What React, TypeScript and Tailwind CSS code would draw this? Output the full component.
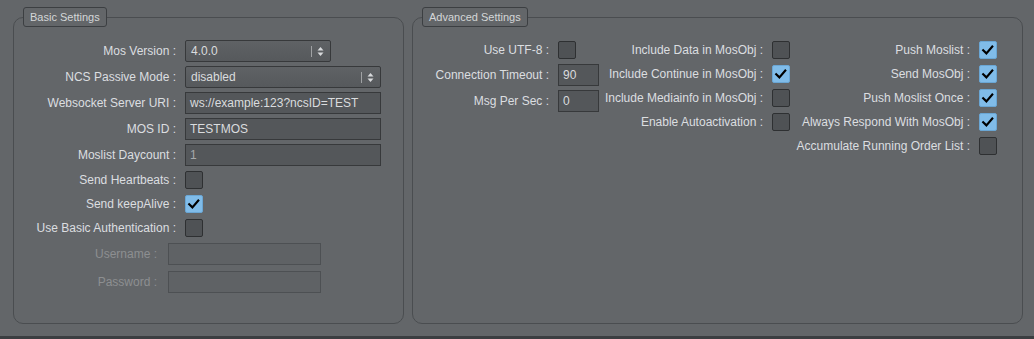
import React from "react";

const FONT = { fontFamily: '"Liberation Sans", Arial, sans-serif' };

function Check({ checked }: { checked?: boolean }) {
  if (checked) {
    return (
      <div className="w-[18px] h-[18px] rounded-[2px] bg-[#80bce9] border border-[#6aa6d4] flex items-center justify-center shrink-0">
        <svg width="18" height="18" viewBox="0 0 18 18">
          <path d="M3.6 9.2 L7.2 12.8 L13.8 5.2" fill="none" stroke="#000" strokeWidth="2.4" strokeLinecap="square" />
        </svg>
      </div>
    );
  }
  return <div className="w-[18px] h-[18px] rounded-[2px] bg-[#4f5255] border border-[#2e3032] shrink-0" />;
}

function TextBox({ value, w, dim, disabled }: { value?: string; w: string; dim?: boolean; disabled?: boolean }) {
  return (
    <div
      className={`${w} h-[22px] border flex items-center pl-[4px] text-[12px] ${
        disabled
          ? "bg-[#5f6265] border-[#4d5053]"
          : "bg-[#54575a] border-[#37393b]"
      } ${dim ? "text-[#a7a9ab]" : "text-[#dadcde]"}`}
    >
      {value}
    </div>
  );
}

function Select({ value, w }: { value: string; w: string }) {
  return (
    <div className={`${w} h-[22px] border border-[#37393b] rounded-[2px] bg-gradient-to-b from-[#5f6265] to-[#56595c] flex items-center pl-[5px] text-[12px] text-[#dadcde]`}>
      <span className="flex-1">{value}</span>
      <div className="w-[1px] h-[11px] bg-[#a0a2a4] mr-[5px]" />
      <svg width="7" height="11" viewBox="0 0 7 11" className="mr-[6px]">
        <path d="M3.5 1 L6.5 4.5 L0.5 4.5 Z" fill="#d8dadc" />
        <path d="M0.5 6.5 L6.5 6.5 L3.5 10 Z" fill="#d8dadc" />
      </svg>
    </div>
  );
}

function Row({
  label,
  labelW,
  gap = "gap-[9px]",
  h = "h-[22px]",
  mt = "",
  disabled,
  children,
}: {
  label: string;
  labelW: string;
  gap?: string;
  h?: string;
  mt?: string;
  disabled?: boolean;
  children: React.ReactNode;
}) {
  return (
    <div className={`flex items-center ${gap} ${h} ${mt}`}>
      <div className={`${labelW} text-right text-[12px] whitespace-nowrap ${disabled ? "text-[#8d8f91]" : "text-[#dcdee0]"}`}>
        {label}
      </div>
      {children}
    </div>
  );
}

function Group({ title, w, children }: { title: string; w: string; children: React.ReactNode }) {
  return (
    <section className={`${w} shrink-0 flex flex-col`}>
      <div className="relative z-10 ml-[10px] w-fit h-[20px] px-[6px] border border-[#3c3f42] rounded-[3px] bg-[#636669] text-[11px] leading-[18px] text-[#d4d6d8]">
        {title}
      </div>
      <div className="-mt-[10px] h-[307px] border border-[#4a4d50] rounded-[10px] pt-[22px]">{children}</div>
    </section>
  );
}

export default function App() {
  const L = "w-[162px]";
  return (
    <div className="w-[1034px] h-[339px] bg-[#636669] flex flex-col" style={FONT}>
      <div className="flex-1 flex gap-[8px] pt-[7px] pl-[13px]">
        <Group title="Basic Settings" w="w-[391px]">
          <div className="flex flex-col">
            <Row label="Mos Version :" labelW={L}>
              <Select value="4.0.0" w="w-[146px]" />
            </Row>
            <Row label="NCS Passive Mode :" labelW={L} mt="mt-[4px]">
              <Select value="disabled" w="w-[196px]" />
            </Row>
            <Row label="Websocket Server URI :" labelW={L} mt="mt-[4px]">
              <TextBox value="ws://example:123?ncsID=TEST" w="w-[196px]" />
            </Row>
            <Row label="MOS ID :" labelW={L} mt="mt-[4px]">
              <TextBox value="TESTMOS" w="w-[196px]" />
            </Row>
            <Row label="Moslist Daycount :" labelW={L} mt="mt-[4px]">
              <TextBox value="1" w="w-[196px]" dim />
            </Row>
            <Row label="Send Heartbeats :" labelW={L} h="h-[20px]" mt="mt-[4px]">
              <Check />
            </Row>
            <Row label="Send keepAlive :" labelW={L} h="h-[20px]" mt="mt-[4px]">
              <Check checked />
            </Row>
            <Row label="Use Basic Authentication :" labelW={L} h="h-[20px]" mt="mt-[4px]">
              <Check />
            </Row>
            <Row label="Username :" labelW="w-[143px]" gap="gap-[11px]" mt="mt-[5px]" disabled>
              <TextBox w="w-[153px]" disabled />
            </Row>
            <Row label="Password :" labelW="w-[143px]" gap="gap-[11px]" mt="mt-[6px]" disabled>
              <TextBox w="w-[153px]" disabled />
            </Row>
          </div>
        </Group>
        <Group title="Advanced Settings" w="w-[611px]">
          <div className="flex items-start">
            <div className="flex flex-col w-[186px]">
              <Row label="Use UTF-8 :" labelW="w-[136px]" h="h-[20px]">
                <Check />
              </Row>
              <Row label="Connection Timeout :" labelW="w-[136px]" mt="mt-[4px]">
                <TextBox value="90" w="w-[41px]" />
              </Row>
              <Row label="Msg Per Sec :" labelW="w-[136px]" mt="mt-[4px]">
                <TextBox value="0" w="w-[41px]" />
              </Row>
            </div>
            <div className="flex flex-col gap-[4px] w-[191px]">
              <Row label="Include Data in MosObj :" labelW="w-[164px]" h="h-[20px]">
                <Check />
              </Row>
              <Row label="Include Continue in MosObj :" labelW="w-[164px]" h="h-[20px]">
                <Check checked />
              </Row>
              <Row label="Include Mediainfo in MosObj :" labelW="w-[164px]" h="h-[20px]">
                <Check />
              </Row>
              <Row label="Enable Autoactivation :" labelW="w-[164px]" h="h-[20px]">
                <Check />
              </Row>
            </div>
            <div className="flex flex-col gap-[4px]">
              <Row label="Push Moslist :" labelW="w-[180px]" h="h-[20px]">
                <Check checked />
              </Row>
              <Row label="Send MosObj :" labelW="w-[180px]" h="h-[20px]">
                <Check checked />
              </Row>
              <Row label="Push Moslist Once :" labelW="w-[180px]" h="h-[20px]">
                <Check checked />
              </Row>
              <Row label="Always Respond With MosObj :" labelW="w-[180px]" h="h-[20px]">
                <Check checked />
              </Row>
              <Row label="Accumulate Running Order List :" labelW="w-[180px]" h="h-[20px]">
                <Check />
              </Row>
            </div>
          </div>
        </Group>
      </div>
      <div className="h-[3px] bg-[#3b3e41]" />
    </div>
  );
}
